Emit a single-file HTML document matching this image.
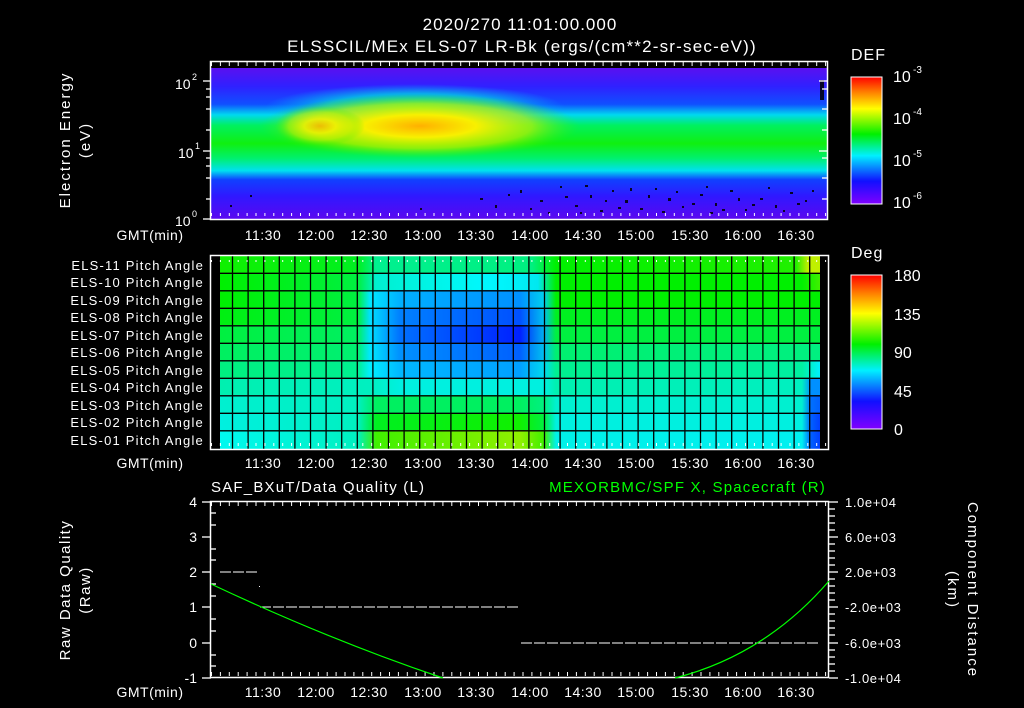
<!DOCTYPE html>
<html><head><meta charset="utf-8"><style>
html,body{margin:0;padding:0;background:#000;}
svg{display:block;}
text{font-family:"Liberation Sans",sans-serif;fill:#fff;}
</style></head><body>
<svg width="1024" height="708" viewBox="0 0 1024 708" xmlns="http://www.w3.org/2000/svg">
<defs>
<linearGradient id="spec" x1="0" y1="68" x2="0" y2="219" gradientUnits="userSpaceOnUse">
<stop offset="0" stop-color="#5a10f0"/>
<stop offset="0.12" stop-color="#3020ff"/>
<stop offset="0.24" stop-color="#1050ff"/>
<stop offset="0.31" stop-color="#00d8f0"/>
<stop offset="0.38" stop-color="#00f060"/>
<stop offset="0.5" stop-color="#10f010"/>
<stop offset="0.6" stop-color="#00f070"/>
<stop offset="0.68" stop-color="#00e0f0"/>
<stop offset="0.74" stop-color="#1040ff"/>
<stop offset="0.85" stop-color="#3018ff"/>
<stop offset="1" stop-color="#5a08f0"/>
</linearGradient>
<radialGradient id="yel" cx="0.5" cy="0.5" r="0.5">
<stop offset="0" stop-color="#ffb000"/>
<stop offset="0.35" stop-color="#f8f000"/>
<stop offset="0.7" stop-color="#c0f000" stop-opacity="0.7"/>
<stop offset="1" stop-color="#40f000" stop-opacity="0"/>
</radialGradient>
<radialGradient id="grn" cx="0.5" cy="0.5" r="0.5">
<stop offset="0" stop-color="#00f080"/>
<stop offset="0.6" stop-color="#00e0e0" stop-opacity="0.7"/>
<stop offset="1" stop-color="#00c0ff" stop-opacity="0"/>
</radialGradient>
<linearGradient id="cb" x1="0" y1="1" x2="0" y2="0">
<stop offset="0" stop-color="#8000ff"/>
<stop offset="0.18" stop-color="#1010ff"/>
<stop offset="0.38" stop-color="#00f0ff"/>
<stop offset="0.55" stop-color="#00f000"/>
<stop offset="0.75" stop-color="#ffff00"/>
<stop offset="0.88" stop-color="#ff8000"/>
<stop offset="1" stop-color="#ff0000"/>
</linearGradient>
<linearGradient id="r1" x1="220" x2="820" gradientUnits="userSpaceOnUse"><stop offset="0" stop-color="#10f000"/><stop offset="0.23" stop-color="#00f020"/><stop offset="0.26" stop-color="#00f090"/><stop offset="0.52" stop-color="#00f080"/><stop offset="0.54" stop-color="#00f040"/><stop offset="0.56" stop-color="#00f000"/><stop offset="0.96" stop-color="#20f000"/><stop offset="0.98" stop-color="#c0f000"/><stop offset="1" stop-color="#c0f000"/></linearGradient>
<linearGradient id="r2" x1="220" x2="820" gradientUnits="userSpaceOnUse"><stop offset="0" stop-color="#00f000"/><stop offset="0.23" stop-color="#00f040"/><stop offset="0.26" stop-color="#00f0d0"/><stop offset="0.45" stop-color="#00f8ff"/><stop offset="0.53" stop-color="#00e8f0"/><stop offset="0.56" stop-color="#00f000"/><stop offset="0.97" stop-color="#00f000"/><stop offset="1" stop-color="#40f000"/></linearGradient>
<linearGradient id="r3" x1="220" x2="820" gradientUnits="userSpaceOnUse"><stop offset="0" stop-color="#00f000"/><stop offset="0.23" stop-color="#00f040"/><stop offset="0.25" stop-color="#00e8ff"/><stop offset="0.3" stop-color="#00b0ff"/><stop offset="0.5" stop-color="#0090ff"/><stop offset="0.54" stop-color="#00d0f0"/><stop offset="0.56" stop-color="#00f000"/><stop offset="1" stop-color="#00f000"/></linearGradient>
<linearGradient id="r4" x1="220" x2="820" gradientUnits="userSpaceOnUse"><stop offset="0" stop-color="#00f010"/><stop offset="0.23" stop-color="#00f040"/><stop offset="0.25" stop-color="#00e0ff"/><stop offset="0.3" stop-color="#0080ff"/><stop offset="0.5" stop-color="#0050ff"/><stop offset="0.54" stop-color="#00c0f0"/><stop offset="0.56" stop-color="#00f020"/><stop offset="1" stop-color="#00f020"/></linearGradient>
<linearGradient id="r5" x1="220" x2="820" gradientUnits="userSpaceOnUse"><stop offset="0" stop-color="#00f040"/><stop offset="0.23" stop-color="#00f060"/><stop offset="0.25" stop-color="#00e0ff"/><stop offset="0.3" stop-color="#0070ff"/><stop offset="0.5" stop-color="#0020ff"/><stop offset="0.54" stop-color="#00b0f0"/><stop offset="0.56" stop-color="#00f040"/><stop offset="1" stop-color="#00f040"/></linearGradient>
<linearGradient id="r6" x1="220" x2="820" gradientUnits="userSpaceOnUse"><stop offset="0" stop-color="#00f060"/><stop offset="0.23" stop-color="#00f070"/><stop offset="0.25" stop-color="#00e8ff"/><stop offset="0.3" stop-color="#0090ff"/><stop offset="0.5" stop-color="#0060ff"/><stop offset="0.54" stop-color="#00c0f0"/><stop offset="0.56" stop-color="#00f070"/><stop offset="1" stop-color="#00f080"/></linearGradient>
<linearGradient id="r7" x1="220" x2="820" gradientUnits="userSpaceOnUse"><stop offset="0" stop-color="#00f080"/><stop offset="0.23" stop-color="#00f090"/><stop offset="0.25" stop-color="#00f0ff"/><stop offset="0.3" stop-color="#00b8ff"/><stop offset="0.5" stop-color="#00a0ff"/><stop offset="0.54" stop-color="#00d8f0"/><stop offset="0.56" stop-color="#00f090"/><stop offset="0.97" stop-color="#00f0a0"/><stop offset="1" stop-color="#00f0ff"/></linearGradient>
<linearGradient id="r8" x1="220" x2="820" gradientUnits="userSpaceOnUse"><stop offset="0" stop-color="#00f0b0"/><stop offset="0.25" stop-color="#00f0c0"/><stop offset="0.3" stop-color="#00f0e0"/><stop offset="0.54" stop-color="#00f0e0"/><stop offset="0.56" stop-color="#00f0b0"/><stop offset="0.97" stop-color="#00f0c0"/><stop offset="0.985" stop-color="#0090ff"/><stop offset="1" stop-color="#0090ff"/></linearGradient>
<linearGradient id="r9" x1="220" x2="820" gradientUnits="userSpaceOnUse"><stop offset="0" stop-color="#00f0d0"/><stop offset="0.23" stop-color="#00f0c0"/><stop offset="0.26" stop-color="#00f060"/><stop offset="0.5" stop-color="#00f060"/><stop offset="0.54" stop-color="#00f080"/><stop offset="0.56" stop-color="#00f0d0"/><stop offset="0.97" stop-color="#00f0d0"/><stop offset="0.985" stop-color="#0070ff"/><stop offset="1" stop-color="#0060ff"/></linearGradient>
<linearGradient id="r10" x1="220" x2="820" gradientUnits="userSpaceOnUse"><stop offset="0" stop-color="#00f0e0"/><stop offset="0.23" stop-color="#00f0c0"/><stop offset="0.26" stop-color="#00f020"/><stop offset="0.5" stop-color="#10f000"/><stop offset="0.54" stop-color="#00f040"/><stop offset="0.56" stop-color="#00f0e0"/><stop offset="0.97" stop-color="#00f0e0"/><stop offset="0.985" stop-color="#0060ff"/><stop offset="1" stop-color="#0040ff"/></linearGradient>
<linearGradient id="r11" x1="220" x2="820" gradientUnits="userSpaceOnUse"><stop offset="0" stop-color="#00f8f0"/><stop offset="0.23" stop-color="#00f0c0"/><stop offset="0.26" stop-color="#40f000"/><stop offset="0.5" stop-color="#90f000"/><stop offset="0.54" stop-color="#40f000"/><stop offset="0.56" stop-color="#00f0e8"/><stop offset="0.97" stop-color="#00f0f0"/><stop offset="0.985" stop-color="#0060ff"/><stop offset="1" stop-color="#0040ff"/></linearGradient>
<pattern id="ticksTop" x="211" y="0" width="8.9" height="10" patternUnits="userSpaceOnUse"><rect x="0" y="0" width="1" height="6" fill="#fff"/></pattern>
</defs>

<text x="520" y="30" font-size="17" text-anchor="middle" letter-spacing="1">2020/270 11:01:00.000</text>
<text x="522" y="52" font-size="17" text-anchor="middle" letter-spacing="1.2">ELSSCIL/MEx ELS-07 LR-Bk  (ergs/(cm**2-sr-sec-eV))</text>

<!-- Top panel -->
<rect x="211" y="68" width="616" height="151" fill="url(#spec)"/>
<ellipse cx="415" cy="108" rx="150" ry="24" fill="url(#grn)"/>
<ellipse cx="420" cy="126" rx="160" ry="32" fill="url(#yel)"/>
<ellipse cx="320" cy="126" rx="45" ry="20" fill="url(#yel)" opacity="0.8"/>
<g fill="#000" opacity="0.85">
<rect x="480" y="198" width="3" height="2"/><rect x="520" y="190" width="2" height="3"/><rect x="540" y="200" width="3" height="2"/><rect x="560" y="186" width="2" height="2"/><rect x="575" y="205" width="3" height="2"/><rect x="590" y="195" width="2" height="3"/><rect x="600" y="210" width="3" height="2"/><rect x="612" y="190" width="2" height="2"/><rect x="625" y="200" width="3" height="3"/><rect x="640" y="208" width="3" height="2"/><rect x="655" y="188" width="2" height="2"/><rect x="668" y="198" width="3" height="3"/><rect x="682" y="206" width="2" height="2"/><rect x="700" y="194" width="3" height="2"/><rect x="715" y="203" width="2" height="3"/><rect x="730" y="190" width="3" height="2"/><rect x="745" y="209" width="2" height="2"/><rect x="760" y="198" width="3" height="2"/><rect x="775" y="205" width="2" height="3"/><rect x="790" y="192" width="3" height="2"/><rect x="805" y="200" width="2" height="2"/><rect x="230" y="205" width="2" height="2"/><rect x="250" y="195" width="2" height="2"/><rect x="420" y="208" width="2" height="2"/><rect x="820" y="80" width="4" height="20"/>
<rect x="495" y="205" width="2" height="3"/><rect x="585" y="185" width="3" height="2"/><rect x="630" y="188" width="2" height="3"/><rect x="710" y="212" width="3" height="2"/><rect x="768" y="187" width="2" height="2"/><rect x="548" y="212" width="2" height="2"/>
<rect x="565" y="196" width="3" height="2"/><rect x="580" y="212" width="2" height="2"/><rect x="605" y="200" width="2" height="2"/><rect x="618" y="207" width="3" height="2"/><rect x="648" y="195" width="2" height="3"/><rect x="662" y="211" width="3" height="2"/><rect x="676" y="191" width="2" height="2"/><rect x="692" y="203" width="3" height="2"/><rect x="706" y="186" width="2" height="2"/><rect x="722" y="209" width="3" height="2"/><rect x="738" y="198" width="2" height="3"/><rect x="752" y="204" width="3" height="2"/><rect x="783" y="210" width="2" height="2"/><rect x="797" y="203" width="3" height="2"/><rect x="812" y="190" width="2" height="2"/><rect x="508" y="194" width="2" height="2"/><rect x="530" y="208" width="2" height="2"/>
</g>
<rect x="210.5" y="61.5" width="617" height="158" fill="none" stroke="#fff" stroke-width="1.5"/>
<rect x="211" y="62" width="616" height="6" fill="url(#ticksTop)"/>
<rect x="211" y="213" width="616" height="6" fill="url(#ticksTop)"/>
<g stroke="#fff" stroke-width="1.3">
<line x1="203" y1="81" x2="211" y2="81"/><line x1="203" y1="151" x2="211" y2="151"/><line x1="203" y1="219" x2="211" y2="219"/>
<line x1="206" y1="89" x2="211" y2="89"/><line x1="206" y1="97" x2="211" y2="97"/><line x1="206" y1="109" x2="211" y2="109"/><line x1="206" y1="130" x2="211" y2="130"/><line x1="206" y1="158" x2="211" y2="158"/><line x1="206" y1="166" x2="211" y2="166"/><line x1="206" y1="178" x2="211" y2="178"/><line x1="206" y1="199" x2="211" y2="199"/>
<line x1="819" y1="81" x2="827" y2="81"/><line x1="819" y1="151" x2="827" y2="151"/><line x1="822" y1="89" x2="827" y2="89"/><line x1="822" y1="109" x2="827" y2="109"/><line x1="822" y1="130" x2="827" y2="130"/><line x1="822" y1="158" x2="827" y2="158"/><line x1="822" y1="178" x2="827" y2="178"/><line x1="822" y1="199" x2="827" y2="199"/>
</g>
<text x="175" y="89" font-size="14">10</text><text x="192" y="80" font-size="9">2</text>
<text x="178" y="158" font-size="14">10</text><text x="195" y="149" font-size="9">1</text>
<text x="175" y="226" font-size="14">10</text><text x="192" y="217" font-size="9">0</text>
<text transform="translate(70,140) rotate(-90)" font-size="15" text-anchor="middle" letter-spacing="2">Electron Energy</text>
<text transform="translate(90,140) rotate(-90)" font-size="15" text-anchor="middle" letter-spacing="2">(eV)</text>

<g font-size="14" text-anchor="middle" letter-spacing="0.5">
<text x="150" y="240">GMT(min)</text>
<text x="263" y="240">11:30</text><text x="316" y="240">12:00</text><text x="369" y="240">12:30</text><text x="423" y="240">13:00</text><text x="476" y="240">13:30</text><text x="530" y="240">14:00</text><text x="583" y="240">14:30</text><text x="636" y="240">15:00</text><text x="690" y="240">15:30</text><text x="743" y="240">16:00</text><text x="796" y="240">16:30</text>
</g>

<text x="851" y="60" font-size="16" letter-spacing="1">DEF</text>
<rect x="851" y="77" width="31" height="127" fill="url(#cb)" stroke="#fff" stroke-width="1"/>
<g font-size="16"><text x="893" y="82">10</text><text x="913" y="73" font-size="10">-3</text>
<text x="893" y="124">10</text><text x="913" y="115" font-size="10">-4</text>
<text x="893" y="166">10</text><text x="913" y="157" font-size="10">-5</text>
<text x="893" y="208">10</text><text x="913" y="199" font-size="10">-6</text></g>

<!-- Middle panel -->
<rect x="220" y="256" width="600" height="18" fill="url(#r1)"/>
<rect x="220" y="273" width="600" height="18" fill="url(#r2)"/>
<rect x="220" y="290" width="600" height="18" fill="url(#r3)"/>
<rect x="220" y="308" width="600" height="18" fill="url(#r4)"/>
<rect x="220" y="325" width="600" height="18" fill="url(#r5)"/>
<rect x="220" y="343" width="600" height="18" fill="url(#r6)"/>
<rect x="220" y="360" width="600" height="18" fill="url(#r7)"/>
<rect x="220" y="378" width="600" height="18" fill="url(#r8)"/>
<rect x="220" y="395" width="600" height="18" fill="url(#r9)"/>
<rect x="220" y="413" width="600" height="18" fill="url(#r10)"/>
<rect x="220" y="430" width="600" height="19" fill="url(#r11)"/>
<g stroke="#000" stroke-width="1.3">
<line x1="220" y1="273.3" x2="820" y2="273.3"/><line x1="220" y1="290.8" x2="820" y2="290.8"/><line x1="220" y1="308.3" x2="820" y2="308.3"/><line x1="220" y1="325.8" x2="820" y2="325.8"/><line x1="220" y1="343.3" x2="820" y2="343.3"/><line x1="220" y1="360.8" x2="820" y2="360.8"/><line x1="220" y1="378.3" x2="820" y2="378.3"/><line x1="220" y1="395.8" x2="820" y2="395.8"/><line x1="220" y1="413.3" x2="820" y2="413.3"/><line x1="220" y1="430.8" x2="820" y2="430.8"/>
</g>
<g stroke="#000" stroke-width="1.3">
<line x1="232.5" y1="256" x2="232.5" y2="449"/><line x1="248.1" y1="256" x2="248.1" y2="449"/><line x1="263.7" y1="256" x2="263.7" y2="449"/><line x1="279.3" y1="256" x2="279.3" y2="449"/><line x1="294.9" y1="256" x2="294.9" y2="449"/><line x1="310.5" y1="256" x2="310.5" y2="449"/><line x1="326.1" y1="256" x2="326.1" y2="449"/><line x1="341.7" y1="256" x2="341.7" y2="449"/><line x1="357.3" y1="256" x2="357.3" y2="449"/><line x1="372.9" y1="256" x2="372.9" y2="449"/><line x1="388.5" y1="256" x2="388.5" y2="449"/><line x1="404.1" y1="256" x2="404.1" y2="449"/><line x1="419.7" y1="256" x2="419.7" y2="449"/><line x1="435.3" y1="256" x2="435.3" y2="449"/><line x1="450.9" y1="256" x2="450.9" y2="449"/><line x1="466.5" y1="256" x2="466.5" y2="449"/><line x1="482.1" y1="256" x2="482.1" y2="449"/><line x1="497.7" y1="256" x2="497.7" y2="449"/><line x1="513.3" y1="256" x2="513.3" y2="449"/><line x1="528.9" y1="256" x2="528.9" y2="449"/><line x1="544.5" y1="256" x2="544.5" y2="449"/><line x1="560.1" y1="256" x2="560.1" y2="449"/><line x1="575.7" y1="256" x2="575.7" y2="449"/><line x1="591.3" y1="256" x2="591.3" y2="449"/><line x1="606.9" y1="256" x2="606.9" y2="449"/><line x1="622.5" y1="256" x2="622.5" y2="449"/><line x1="638.1" y1="256" x2="638.1" y2="449"/><line x1="653.7" y1="256" x2="653.7" y2="449"/><line x1="669.3" y1="256" x2="669.3" y2="449"/><line x1="684.9" y1="256" x2="684.9" y2="449"/><line x1="700.5" y1="256" x2="700.5" y2="449"/><line x1="716.1" y1="256" x2="716.1" y2="449"/><line x1="731.7" y1="256" x2="731.7" y2="449"/><line x1="747.3" y1="256" x2="747.3" y2="449"/><line x1="762.9" y1="256" x2="762.9" y2="449"/><line x1="778.5" y1="256" x2="778.5" y2="449"/><line x1="794.1" y1="256" x2="794.1" y2="449"/><line x1="809.7" y1="256" x2="809.7" y2="449"/>
</g>
<rect x="210.5" y="255.5" width="618" height="194" fill="none" stroke="#fff" stroke-width="1.5"/>
<rect x="211" y="256" width="617" height="6" fill="url(#ticksTop)"/>
<rect x="211" y="443" width="617" height="6" fill="url(#ticksTop)"/>
<g font-size="13" text-anchor="end" letter-spacing="1.2">
<text x="204" y="270">ELS-11 Pitch Angle</text><text x="204" y="287">ELS-10 Pitch Angle</text><text x="204" y="305">ELS-09 Pitch Angle</text><text x="204" y="322">ELS-08 Pitch Angle</text><text x="204" y="340">ELS-07 Pitch Angle</text><text x="204" y="357">ELS-06 Pitch Angle</text><text x="204" y="375">ELS-05 Pitch Angle</text><text x="204" y="392">ELS-04 Pitch Angle</text><text x="204" y="410">ELS-03 Pitch Angle</text><text x="204" y="427">ELS-02 Pitch Angle</text><text x="204" y="445">ELS-01 Pitch Angle</text>
</g>
<g font-size="14" text-anchor="middle" letter-spacing="0.5">
<text x="150" y="468">GMT(min)</text>
<text x="263" y="468">11:30</text><text x="316" y="468">12:00</text><text x="369" y="468">12:30</text><text x="423" y="468">13:00</text><text x="476" y="468">13:30</text><text x="530" y="468">14:00</text><text x="583" y="468">14:30</text><text x="636" y="468">15:00</text><text x="690" y="468">15:30</text><text x="743" y="468">16:00</text><text x="796" y="468">16:30</text>
</g>
<text x="851" y="258" font-size="16" letter-spacing="1">Deg</text>
<rect x="851" y="275" width="31" height="154" fill="url(#cb)" stroke="#fff" stroke-width="1"/>
<g font-size="16"><text x="894" y="281">180</text><text x="894" y="320">135</text><text x="894" y="358">90</text><text x="894" y="397">45</text><text x="894" y="435">0</text></g>

<!-- Bottom panel -->
<text x="211" y="492" font-size="15" letter-spacing="1.2">SAF_BXuT/Data Quality (L)</text>
<text x="826" y="492" font-size="15" text-anchor="end" letter-spacing="1.2" style="fill:#00ff00">MEXORBMC/SPF X, Spacecraft (R)</text>
<rect x="210.5" y="501.5" width="618" height="176" fill="none" stroke="#fff" stroke-width="1.5"/>
<rect x="211" y="502" width="617" height="6" fill="url(#ticksTop)"/>
<rect x="211" y="672" width="617" height="6" fill="url(#ticksTop)"/>
<g stroke="#fff" stroke-width="1.3">
<line x1="202" y1="502" x2="211" y2="502"/><line x1="202" y1="537" x2="211" y2="537"/><line x1="202" y1="572" x2="211" y2="572"/><line x1="202" y1="607" x2="211" y2="607"/><line x1="202" y1="643" x2="211" y2="643"/><line x1="202" y1="678" x2="211" y2="678"/>
<line x1="829" y1="502" x2="838" y2="502"/><line x1="829" y1="537" x2="838" y2="537"/><line x1="829" y1="572" x2="838" y2="572"/><line x1="829" y1="607" x2="838" y2="607"/><line x1="829" y1="643" x2="838" y2="643"/><line x1="829" y1="678" x2="838" y2="678"/>
<line x1="829" y1="509" x2="835" y2="509"/><line x1="829" y1="516" x2="835" y2="516"/><line x1="829" y1="523" x2="835" y2="523"/><line x1="829" y1="530" x2="835" y2="530"/><line x1="829" y1="544" x2="835" y2="544"/><line x1="829" y1="551" x2="835" y2="551"/><line x1="829" y1="558" x2="835" y2="558"/><line x1="829" y1="565" x2="835" y2="565"/><line x1="829" y1="579" x2="835" y2="579"/><line x1="829" y1="586" x2="835" y2="586"/><line x1="829" y1="593" x2="835" y2="593"/><line x1="829" y1="600" x2="835" y2="600"/><line x1="829" y1="614" x2="835" y2="614"/><line x1="829" y1="621" x2="835" y2="621"/><line x1="829" y1="628" x2="835" y2="628"/><line x1="829" y1="635" x2="835" y2="635"/><line x1="829" y1="650" x2="835" y2="650"/><line x1="829" y1="657" x2="835" y2="657"/><line x1="829" y1="664" x2="835" y2="664"/><line x1="829" y1="671" x2="835" y2="671"/>
<line x1="211" y1="513" x2="216" y2="513"/><line x1="211" y1="525" x2="216" y2="525"/><line x1="211" y1="549" x2="216" y2="549"/><line x1="211" y1="560" x2="216" y2="560"/><line x1="211" y1="584" x2="216" y2="584"/><line x1="211" y1="596" x2="216" y2="596"/><line x1="211" y1="619" x2="216" y2="619"/><line x1="211" y1="631" x2="216" y2="631"/><line x1="211" y1="655" x2="216" y2="655"/><line x1="211" y1="666" x2="216" y2="666"/>
</g>
<g stroke="#fff" stroke-width="1" stroke-dasharray="11,2">
<line x1="220" y1="572" x2="259" y2="572"/>
<line x1="260" y1="607" x2="520" y2="607"/>
<line x1="521" y1="643" x2="819" y2="643"/>
</g>
<rect x="259" y="586" width="1" height="1" fill="#fff"/>
<path d="M211,584 Q330,640 443,678" fill="none" stroke="#00ff00" stroke-width="1.2"/>
<path d="M675,678 Q765,655 829,581" fill="none" stroke="#00ff00" stroke-width="1.2"/>
<g font-size="14" text-anchor="end">
<text x="197" y="507">4</text><text x="197" y="542">3</text><text x="197" y="577">2</text><text x="197" y="612">1</text><text x="197" y="648">0</text><text x="197" y="683">-1</text>
</g>
<g font-size="13" letter-spacing="0.6">
<text x="845" y="507">1.0e+04</text><text x="845" y="542">6.0e+03</text><text x="845" y="577">2.0e+03</text><text x="845" y="612">-2.0e+03</text><text x="845" y="648">-6.0e+03</text><text x="845" y="683">-1.0e+04</text>
</g>
<text transform="translate(70,590) rotate(-90)" font-size="15" text-anchor="middle" letter-spacing="1.5">Raw Data Quality</text>
<text transform="translate(90,590) rotate(-90)" font-size="15" text-anchor="middle" letter-spacing="1.5">(Raw)</text>
<text transform="translate(968,590) rotate(90)" font-size="15" text-anchor="middle" letter-spacing="2">Component Distance</text>
<text transform="translate(948,590) rotate(90)" font-size="15" text-anchor="middle" letter-spacing="2">(km)</text>
<g font-size="14" text-anchor="middle" letter-spacing="0.5">
<text x="150" y="697">GMT(min)</text>
<text x="263" y="697">11:30</text><text x="316" y="697">12:00</text><text x="369" y="697">12:30</text><text x="423" y="697">13:00</text><text x="476" y="697">13:30</text><text x="530" y="697">14:00</text><text x="583" y="697">14:30</text><text x="636" y="697">15:00</text><text x="690" y="697">15:30</text><text x="743" y="697">16:00</text><text x="796" y="697">16:30</text>
</g>
</svg>
</body></html>
